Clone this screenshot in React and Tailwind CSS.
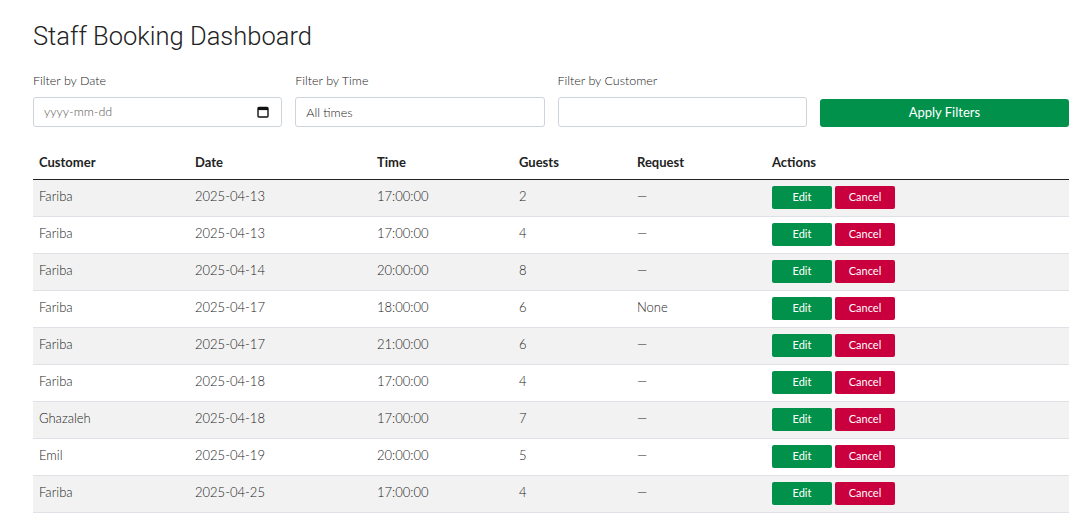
const bookings = [
  { customer: "Fariba", date: "2025-04-13", time: "17:00:00", guests: 2, request: "—" },
  { customer: "Fariba", date: "2025-04-13", time: "17:00:00", guests: 4, request: "—" },
  { customer: "Fariba", date: "2025-04-14", time: "20:00:00", guests: 8, request: "—" },
  { customer: "Fariba", date: "2025-04-17", time: "18:00:00", guests: 6, request: "None" },
  { customer: "Fariba", date: "2025-04-17", time: "21:00:00", guests: 6, request: "—" },
  { customer: "Fariba", date: "2025-04-18", time: "17:00:00", guests: 4, request: "—" },
  { customer: "Ghazaleh", date: "2025-04-18", time: "17:00:00", guests: 7, request: "—" },
  { customer: "Emil", date: "2025-04-19", time: "20:00:00", guests: 5, request: "—" },
  { customer: "Fariba", date: "2025-04-25", time: "17:00:00", guests: 4, request: "—" },
];

function CalendarIcon() {
  return (
    <svg width="12" height="12" viewBox="0 0 12 12" className="shrink-0">
      <rect x="1" y="1.5" width="10" height="9.5" rx="1" fill="none" stroke="#111" strokeWidth="1.4" />
      <rect x="1" y="1.5" width="10" height="2.6" fill="#111" />
    </svg>
  );
}

export default function App() {
  return (
    <div className="min-h-screen bg-white pl-[33px] pr-[10px] pt-[18px] text-[#1c1c1c] font-light" style={{ fontFamily: "Lato, 'Open Sans', sans-serif" }}>
      {/* Title */}
      <h1 className="text-[25.5px] font-light leading-[36px] text-[#222]" style={{ fontFamily: "Roboto, sans-serif" }}>
        Staff Booking Dashboard
      </h1>

      {/* Filters */}
      <div className="mt-[19px] grid grid-cols-4 gap-x-[13px] items-end">
        <div>
          <label className="block text-[12.5px] leading-4 mb-[8px]">Filter by Date</label>
          <div className="flex h-[30px] items-center justify-between rounded-[3px] border border-[#ced4da] pl-[10px] pr-[12px]">
            <span className="text-[12.5px] text-[#555]">yyyy-mm-dd</span>
            <CalendarIcon />
          </div>
        </div>
        <div>
          <label className="block text-[12.5px] leading-4 mb-[8px]">Filter by Time</label>
          <input
            className="block h-[30px] w-full rounded-[3px] border border-[#ced4da] px-[10px] text-[12.5px] text-[#1c1c1c] outline-none"
            defaultValue="All times"
          />
        </div>
        <div>
          <label className="block text-[12.5px] leading-4 mb-[8px]">Filter by Customer</label>
          <input className="block h-[30px] w-full rounded-[3px] border border-[#ced4da] px-[10px] text-[12.5px] outline-none" />
        </div>
        <button className="h-[28px] rounded-[3px] bg-[#01914a] text-[13px] font-normal text-white">
          Apply Filters
        </button>
      </div>

      {/* Table */}
      <table className="mt-[16px] w-full border-collapse text-left text-[13px]">
        <thead>
          <tr className="border-b-[1.5px] border-[#222]">
            <th className="w-[156px] h-[36px] px-[6px] pt-[3px] font-bold text-[#222]">Customer</th>
            <th className="w-[182px] px-[6px] pt-[3px] font-bold text-[#222]">Date</th>
            <th className="w-[142px] px-[6px] pt-[3px] font-bold text-[#222]">Time</th>
            <th className="w-[118px] px-[6px] pt-[3px] font-bold text-[#222]">Guests</th>
            <th className="w-[135px] px-[6px] pt-[3px] font-bold text-[#222]">Request</th>
            <th className="px-[6px] pt-[3px] font-bold text-[#222]">Actions</th>
          </tr>
        </thead>
        <tbody>
          {bookings.map((b, i) => (
            <tr key={i} className={`border-b border-[#dee2e6] ${i % 2 === 0 ? "bg-[#f2f2f2]" : "bg-white"}`}>
              <td className="h-[37px] px-[6px] pb-[2px]">{b.customer}</td>
              <td className="px-[6px] pb-[2px]">{b.date}</td>
              <td className="px-[6px] pb-[2px]">{b.time}</td>
              <td className="px-[6px] pb-[2px]">{b.guests}</td>
              <td className="px-[6px] pb-[2px]">{b.request}</td>
              <td className="px-[6px]">
                <div className="flex gap-[3px]">
                  <button className="h-[23px] w-[60px] rounded-[2px] bg-[#01914a] text-[11px] font-normal text-white">Edit</button>
                  <button className="h-[23px] w-[60px] rounded-[2px] bg-[#c9003d] text-[11px] font-normal text-white">Cancel</button>
                </div>
              </td>
            </tr>
          ))}
        </tbody>
      </table>
    </div>
  );
}
